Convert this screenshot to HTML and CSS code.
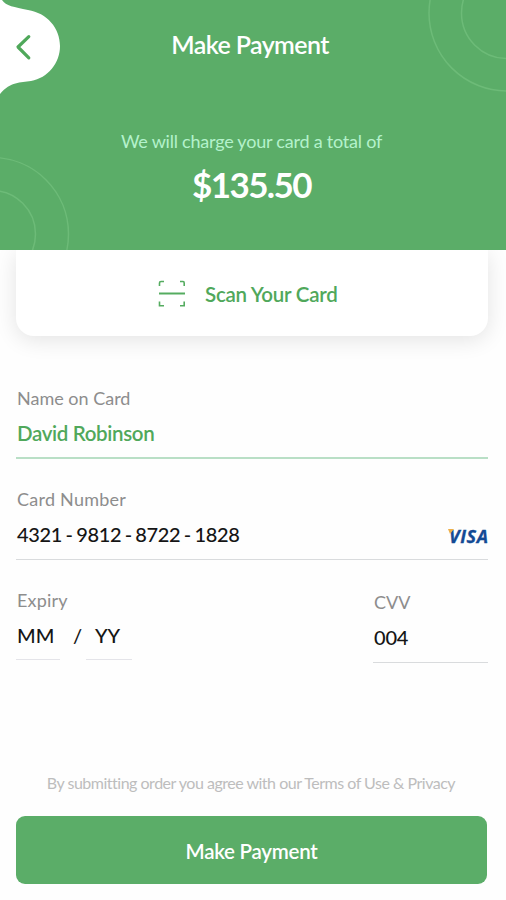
FILE: index.html
```html
<!DOCTYPE html>
<html lang="en">
<head>
<meta charset="utf-8">
<title>Make Payment</title>
<link rel="stylesheet" href="styles.css">
</head>
<body>
<header class="header">
  <svg class="header-art" width="506" height="250" viewBox="0 0 506 250" fill="none" aria-hidden="true">
    <g stroke="#6dbb78" stroke-width="1.5">
      <circle cx="507" cy="13" r="78"/><circle cx="507" cy="13" r="45.5"/>
      <circle cx="-8" cy="234" r="76.5"/><circle cx="-8" cy="234" r="43.5"/>
    </g>
    <path fill="#fff" d="M0 0H2C6 6 14 7 28 10C47 13 60 28 60 46C60 63 48 78 31 81C20 83 11 81 0 94Z"/>
    <path stroke="#4fa85a" stroke-width="3.2" stroke-linejoin="round" stroke-linecap="round" d="M28.8 36.6L18 47L28.8 57.8"/>
  </svg>
  <h1 class="title">Make Payment</h1>
  <p class="note">We will charge your card a total of</p>
  <p class="amount">$135.50</p>
</header>
<main class="content">
  <div class="scan">
    <svg width="28" height="28" viewBox="0 0 28 28" fill="none" stroke="#55ac60" stroke-width="1.6" aria-hidden="true">
      <path d="M1.5 6V3Q1.5 1.5 3 1.5H6M22 1.5H25Q26.2 1.5 26.2 3V6M1.5 21.5V25.8H6M22 25.8H26.2V21.5"/>
      <path stroke-width="2" d="M1 13.5H27"/>
    </svg>
    <span class="scan-label">Scan Your Card</span>
  </div>
  <div class="field active">
    <div class="label l-name">Name on Card</div>
    <div class="value v-name">David Robinson</div>
  </div>
  <div class="field">
    <div class="label l-number">Card Number</div>
    <div class="value row"><span class="v-number">4321 - 9812 - 8722 - 1828</span>
      <span class="visa">VISA</span></div>
  </div>
  <div class="row bottom">
    <div>
      <div class="label l-expiry">Expiry</div>
      <div class="expiry value"><span class="part month">MM</span><span class="slash">/</span><span class="part year">YY</span></div>
    </div>
    <div class="cvv">
      <div class="label l-cvv">CVV</div>
      <div class="value v-cvv">004</div>
    </div>
  </div>
  <p class="terms">By submitting order you agree with our Terms of Use &amp; Privacy</p>
  <button class="pay">Make Payment</button>
</main>
</body>
</html>
```
FILE: styles.css
```css
* { box-sizing: border-box; }
body { margin: 0; height: 900px; overflow: hidden; background: #fefefe; font-family: Lato, sans-serif; color: #151515; }
p, h1 { margin: 0; }
.header { position: relative; z-index: 1; height: 250px; padding-top: 29px; background: #5bad68; color: #fff; text-align: center; }
.header-art { position: absolute; left: 0; top: 0; }
.title { position: relative; font-size: 25px; line-height: 30px; font-weight: 600; letter-spacing: -.6px; padding-right: 6px; white-space: nowrap; }
.note { position: relative; margin-top: 70px; font-size: 18px; line-height: 24px; letter-spacing: -.22px; color: #b4f2cc; padding-right: 3px; }
.amount { position: relative; margin-top: 10px; font-size: 35px; line-height: 42px; font-weight: 700; letter-spacing: -1.6px; padding-right: 3px; }
.content { padding: 0 18px 0 16px; }
.scan { display: flex; align-items: center; gap: 19px; width: 472px; height: 86px; padding: 1px 0 0 142px; border-radius: 0 0 18px 18px; background: #fff; box-shadow: 0 4px 22px rgba(0, 0, 0, .11); }
.scan-label { font-size: 20.5px; font-weight: 600; letter-spacing: -.25px; color: #50a85b; white-space: nowrap; }
.field { height: 73px; margin-top: 28px; border-bottom: 1px solid #d9dbdd; padding-left: 1px; }
.field.active { margin-top: 50px; border-bottom: 2px solid #b9dfc6; }
.label { font-size: 18px; line-height: 24px; color: #8d8d8d; white-space: nowrap; }
.l-number { letter-spacing: .25px; }
.l-expiry { letter-spacing: .2px; }
.value { margin-top: 9px; font-size: 20px; line-height: 28px; font-weight: 500; white-space: nowrap; }
.v-name { font-size: 20.5px; font-weight: 600; letter-spacing: -.35px; color: #50a85b; }
.v-number { letter-spacing: -.33px; word-spacing: -1.25px; }
.row { display: flex; justify-content: space-between; }
.visa { position: relative; font: italic 700 18px/32px "Open Sans", sans-serif; color: #134a94; letter-spacing: .6px; margin-right: -.6px; -webkit-text-stroke: .3px #134a94; }
.visa::before { content: ""; position: absolute; z-index: 1; left: -1px; top: 9px; border-top: 5px solid #eeb04a; border-left: 2px solid transparent; border-right: 4px solid transparent; }
.bottom { margin-top: 28px; height: 75px; align-items: flex-start; padding-left: 1px; }
.expiry { display: flex; }
.part { height: 39px; border-bottom: 1px solid #e4e4e9; }
.month { width: 44px; margin-left: -1px; padding-left: 1px; }
.slash { width: 26px; padding-left: 13px; }
.year { width: 46px; padding-left: 9px; }
.cvv { width: 115px; height: 73px; margin-top: 2px; padding-left: 1px; border-bottom: 1px solid #d9dbdd; }
.v-cvv { letter-spacing: -.2px; }
.terms { margin-top: 109px; font-size: 16px; line-height: 22px; letter-spacing: -.49px; color: #bdbdbd; text-align: center; white-space: nowrap; padding-right: 2px; }
.pay { display: block; width: 471px; height: 68px; margin-top: 22px; padding: 1px 0 0; border: 0; border-radius: 9px; background: #5bad68; color: #fff; font: 600 20.5px/24px Lato, sans-serif; letter-spacing: -.25px; }
```
